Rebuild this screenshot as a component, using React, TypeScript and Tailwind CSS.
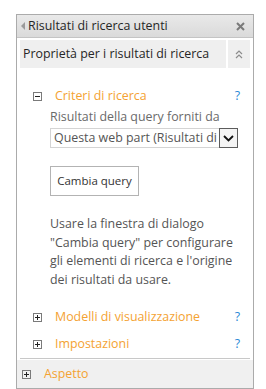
export default function App() {
  const font = { fontFamily: '"Open Sans", "Noto Sans", sans-serif' };
  return (
    <div className="w-[266px] h-[389px] bg-white pl-4 pt-[14px] overflow-hidden" style={font}>
      <div className="w-[238px] h-[375px] border border-[#ababab] flex flex-col">
        {/* header */}
        <div className="h-[23px] shrink-0 flex items-center bg-gradient-to-b from-[#e9e9e9] to-[#dadada] border-b border-[#c4c4c4] pl-[4px] pr-[6px]">
          <span className="w-0 h-0 border-y-[4px] border-y-transparent border-r-[4px] border-r-[#9a9a9a] mr-[3px]" />
          <span className="text-[12.4px] text-[#262626] leading-none flex-1">Risultati di ricerca utenti</span>
          <svg width="9" height="9" viewBox="0 0 9 9" className="mr-[2px]">
            <path d="M1 1L8 8M8 1L1 8" stroke="#7a7a7a" strokeWidth="2" />
          </svg>
        </div>

        <div className="flex-1 flex flex-col px-[3px] pt-[2px]">
          {/* properties row */}
          <div className="h-[28px] shrink-0 flex gap-[2px]">
            <div className="flex-1 bg-[#efefef] flex items-center pl-[3px] text-[12.4px] text-[#262626]">
              Proprietà per i risultati di ricerca
            </div>
            <div className="w-[22px] bg-[#efefef] flex items-center justify-center">
              <svg width="8" height="9" viewBox="0 0 8 9">
                <path d="M1 4L4 1L7 4M1 8L4 5L7 8" stroke="#8c8c8c" strokeWidth="1.2" fill="none" />
              </svg>
            </div>
          </div>

          {/* criteria */}
          <div className="pl-[13px] pr-[10px]">
            <div className="flex items-center h-[20px] mt-[18px]">
              <span className="w-[9px] h-[9px] border border-[#7a7a7a] flex items-center justify-center">
                <span className="w-[5px] h-[1px] bg-[#222]" />
              </span>
              <span className="ml-[13px] text-[12.4px] text-[#f4a232] flex-1">Criteri di ricerca</span>
              <span className="text-[12.4px] text-[#2b8ad6]">?</span>
            </div>

            <div className="pl-[17px] pr-[2px]">
              <div className="text-[12.4px] text-[#6a6a6a] mt-[2px] leading-[18px]">Risultati della query forniti da</div>
              <div className="mt-[2px] h-[20px] flex border border-[#d4d4d4]">
                <div className="flex-1 overflow-hidden whitespace-nowrap text-[12.4px] text-[#555] pl-[3px] leading-[18px]">
                  Questa web part (Risultati di
                </div>
                <div className="w-[19px] -my-px -mr-px border border-[#5c5c5c] bg-[#f4f4f4] flex items-center justify-center">
                  <svg width="11" height="7" viewBox="0 0 11 7">
                    <path d="M1 1L5.5 5.5L10 1" stroke="#111" strokeWidth="1.8" fill="none" />
                  </svg>
                </div>
              </div>

              <button className="mt-[18px] w-[89px] h-[30px] border border-[#b3b3b3] bg-white text-[11.5px] text-[#333] flex items-center justify-center">
                Cambia query
              </button>

              <p className="mt-[19px] text-[12.4px] text-[#555] leading-[18.5px] whitespace-nowrap">
                Usare la finestra di dialogo
                <br />
                "Cambia query" per configurare
                <br />
                gli elementi di ricerca e l'origine
                <br />
                dei risultati da usare.
              </p>
            </div>

            <div className="flex items-center h-[20px] mt-[18px]">
              <span className="w-[9px] h-[9px] border border-[#7a7a7a] relative flex items-center justify-center">
                <span className="w-[5px] h-[1px] bg-[#222]" />
                <span className="absolute w-[1px] h-[5px] bg-[#222]" />
              </span>
              <span className="ml-[13px] text-[12.4px] text-[#f4a232] flex-1">Modelli di visualizzazione</span>
              <span className="text-[12.4px] text-[#2b8ad6]">?</span>
            </div>
            <div className="flex items-center h-[20px] mt-[7px]">
              <span className="w-[9px] h-[9px] border border-[#7a7a7a] relative flex items-center justify-center">
                <span className="w-[5px] h-[1px] bg-[#222]" />
                <span className="absolute w-[1px] h-[5px] bg-[#222]" />
              </span>
              <span className="ml-[13px] text-[12.4px] text-[#f4a232] flex-1">Impostazioni</span>
              <span className="text-[12.4px] text-[#2b8ad6]">?</span>
            </div>
          </div>

          <div className="mt-[4px] h-px shrink-0 bg-[#c8c8c8]" />
          <div className="flex-1 mt-[1px] -mx-[3px] bg-[#f0f0f0] flex items-center pl-[5px]">
            <span className="w-[9px] h-[9px] border border-[#7a7a7a] relative flex items-center justify-center">
              <span className="w-[5px] h-[1px] bg-[#222]" />
              <span className="absolute w-[1px] h-[5px] bg-[#222]" />
            </span>
            <span className="ml-[13px] text-[12.4px] text-[#f4a232]">Aspetto</span>
          </div>
        </div>
      </div>
    </div>
  );
}
